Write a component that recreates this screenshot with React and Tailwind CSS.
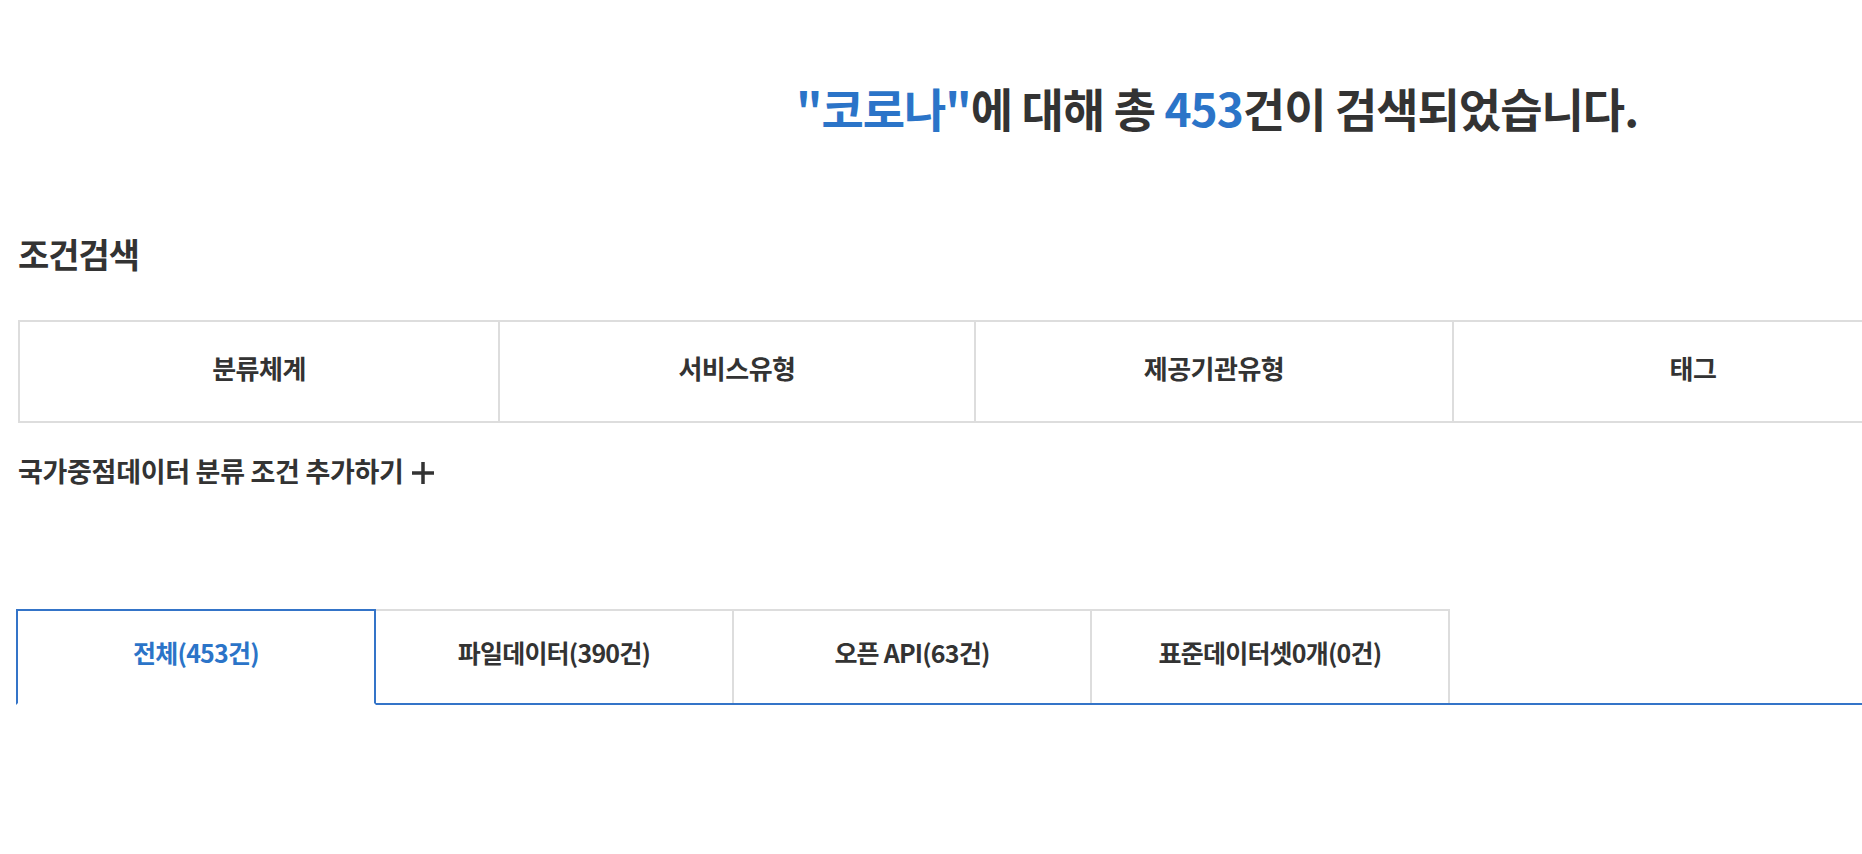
import React from "react";

const FONT = { fontFamily: '"Noto Sans CJK KR", "Noto Sans", sans-serif' };

function PlusIcon() {
  return (
    <svg width="24" height="24" viewBox="0 0 24 24" className="inline-block ml-[7px] align-[-3px]">
      <path d="M12 1v22M1 12h22" stroke="#333" strokeWidth="3.5" fill="none" />
    </svg>
  );
}

export default function App() {
  const cols = [
    { label: "분류체계", w: "w-[480px]" },
    { label: "서비스유형", w: "w-[476px]" },
    { label: "제공기관유형", w: "w-[478px]" },
    { label: "태그", w: "w-[478px]" },
  ];
  const tabs = [
    { label: "파일데이터(390건)" },
    { label: "오픈 API(63건)" },
    { label: "표준데이터셋0개(0건)" },
  ];
  return (
    <div className="w-full h-[854px] overflow-hidden bg-white text-[#333]" style={FONT}>
      <div className="pt-[83px] pl-[796px] whitespace-nowrap">
        <h1 className="text-[46px] leading-[48px] font-bold tracking-[-1px]">
          <span className="text-[#2b74c8]">"코로나"</span>에 대해 총{" "}
          <span className="text-[#2b74c8]">453</span>건이 검색되었습니다.
        </h1>
      </div>

      <div className="pl-[18px]">
        <h2 className="mt-[103px] text-[34px] leading-[40px] font-bold tracking-[-1px]">조건검색</h2>

        <div className="mt-[46px] flex w-max border-2 border-[#dddddd]">
          {cols.map((c, i) => (
            <div
              key={c.label}
              className={`${c.w} h-[99px] pb-[9px] flex items-center justify-center text-[26px] font-bold tracking-[-0.5px] ${
                i < cols.length - 1 ? "border-r-2 border-[#dddddd]" : ""
              }`}
            >
              {c.label}
            </div>
          ))}
        </div>

        <div className="mt-[33px] leading-[30px] text-[27px] font-bold tracking-[-0.3px] whitespace-nowrap">
          국가중점데이터 분류 조건 추가하기
          <PlusIcon />
        </div>
      </div>

      <div className="mt-[123px] ml-[16px] flex border-b-2 border-[#3474c8]">
        <div className="relative z-10 -mb-[2px] w-[360px] h-[96px] pb-[8px] flex items-center justify-center border-2 border-[#3474c8] border-b-white bg-white text-[#2b74c8] text-[25px] font-bold tracking-[-0.8px]">
          전체(453건)
        </div>
        {tabs.map((t) => (
          <div
            key={t.label}
            className="w-[358px] h-[94px] pb-[8px] flex items-center justify-center border-t-2 border-r-2 border-[#dddddd] text-[25px] font-bold tracking-[-0.8px]"
          >
            {t.label}
          </div>
        ))}
      </div>
    </div>
  );
}
